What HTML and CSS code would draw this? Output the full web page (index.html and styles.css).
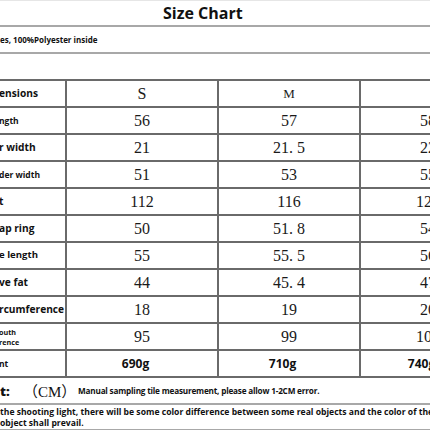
FILE: index.html
```html
<!DOCTYPE html>
<html>
<head>
<meta charset="utf-8">
<link rel="stylesheet" href="styles.css">
</head>
<body>
<div class="page">
  <div class="title-row"><h1 class="title">Size Chart</h1></div>
  <div class="fabric-row">es, 100%Polyester inside</div>
  <div class="table-wrap">
    <table class="chart">
      <colgroup>
        <col class="c-label"><col class="c-s"><col class="c-m"><col class="c-l">
      </colgroup>
      <tr class="head"><td class="lab lab-lg">ensions</td><td class="num">S</td><td class="num m">M</td><td class="num l-head">L</td></tr>
      <tr><td class="lab lab-sm">ngth</td><td class="num">56</td><td class="num">57</td><td class="num">58</td></tr>
      <tr><td class="lab lab-lg">r width</td><td class="num">21</td><td class="num">21. 5</td><td class="num">22</td></tr>
      <tr><td class="lab lab-sm">der width</td><td class="num">51</td><td class="num">53</td><td class="num">55</td></tr>
      <tr><td class="lab lab-lg">t</td><td class="num">112</td><td class="num">116</td><td class="num">120</td></tr>
      <tr><td class="lab lab-lg">ap ring</td><td class="num">50</td><td class="num">51. 8</td><td class="num">54</td></tr>
      <tr><td class="lab lab-md">e length</td><td class="num">55</td><td class="num">55. 5</td><td class="num">56</td></tr>
      <tr><td class="lab lab-lg">ve fat</td><td class="num">44</td><td class="num">45. 4</td><td class="num">47</td></tr>
      <tr><td class="lab lab-lg">rcumference</td><td class="num">18</td><td class="num">19</td><td class="num">20</td></tr>
      <tr><td class="lab lab-xs">outh<br>rence</td><td class="num">95</td><td class="num">99</td><td class="num">103</td></tr>
      <tr><td class="lab lab-sm">nt</td><td class="wt">690g</td><td class="wt">710g</td><td class="wt">740g</td></tr>
    </table>
  </div>
  <div class="note-row">
    <span class="note-key">t:</span>
    <span class="note-unit">（CM）</span>
    <span class="note-text">Manual sampling tile measurement, please allow 1-2CM error.</span>
  </div>
  <div class="disclaimer">the shooting light, there will be some color difference between some real objects and the color of the p<br>object shall prevail.</div>
</div>
</body>
</html>
```

FILE: styles.css
```css
html, body {
  margin: 0;
  padding: 0;
  background: #ffffff;
}

.page {
  width: 430px;
  height: 430px;
  overflow: hidden;
  font-family: "Open Sans", "Noto Sans", sans-serif;
  color: #111111;
  border-top: 1px solid #e6e6e6;
  box-sizing: border-box;
}

.title-row {
  height: 24px;
  border-bottom: 2px solid #a8a8a8;
  display: flex;
  align-items: center;
  padding-left: 163px;
}

.title {
  margin: 0;
  font-size: 16px;
  font-weight: 700;
  line-height: 1;
}

.fabric-row {
  height: 25px;
  border-bottom: 2px solid #a8a8a8;
  display: flex;
  align-items: center;
  font-size: 8px;
  font-weight: 700;
}

.table-wrap {
  margin-top: 25px;
  margin-left: -1px;
  width: 520px;
}

.chart {
  border-collapse: collapse;
  table-layout: fixed;
  width: 497px;
  border: 2px solid #6a6a6a;
  border-left: none;
}

.chart td {
  border: 2px solid #6a6a6a;
  height: 25px;
  padding: 0;
  vertical-align: middle;
}

.chart tr td:first-child {
  border-left: none;
}

.c-label { width: 67px; }
.c-s { width: 152px; }
.c-m { width: 142px; }
.c-l { width: 136px; }

.lab {
  font-weight: 700;
  text-align: left;
  white-space: nowrap;
  overflow: hidden;
  line-height: 1.1;
}

.lab-lg { font-size: 10.2px; }
.lab-md { font-size: 9.6px; }
.lab-sm { font-size: 8.5px; }
.lab-xs { font-size: 7.2px; line-height: 10px; }

.num {
  text-align: center;
  font-family: "Liberation Serif", "Noto Sans CJK SC", serif;
  font-size: 16px;
  color: #1a1a1a;
}

.num.m {
  font-size: 13px;
}

.num.l-head {
  text-align: left;
  padding-left: 100px;
}

.wt {
  text-align: center;
  font-size: 12px;
  font-weight: 700;
}

.chart td.wt {
  padding-right: 13px;
}

.note-row {
  height: 25px;
  border-bottom: 2px solid #a8a8a8;
  display: flex;
  align-items: center;
  white-space: nowrap;
}

.note-key {
  font-size: 13px;
  font-weight: 800;
  width: 26px;
}

.note-unit {
  font-family: "Liberation Serif", "Noto Sans CJK SC", serif;
  font-size: 15px;
  width: 52px;
  margin-left: -3px;
  margin-right: 3px;
}

.note-text {
  font-size: 8.2px;
  font-weight: 700;
  letter-spacing: -0.2px;
}

.disclaimer {
  padding-top: 2px;
  height: 22px;
  border-bottom: 2px solid #a8a8a8;
  font-size: 8.6px;
  font-weight: 700;
  line-height: 11px;
  white-space: nowrap;
}
```
